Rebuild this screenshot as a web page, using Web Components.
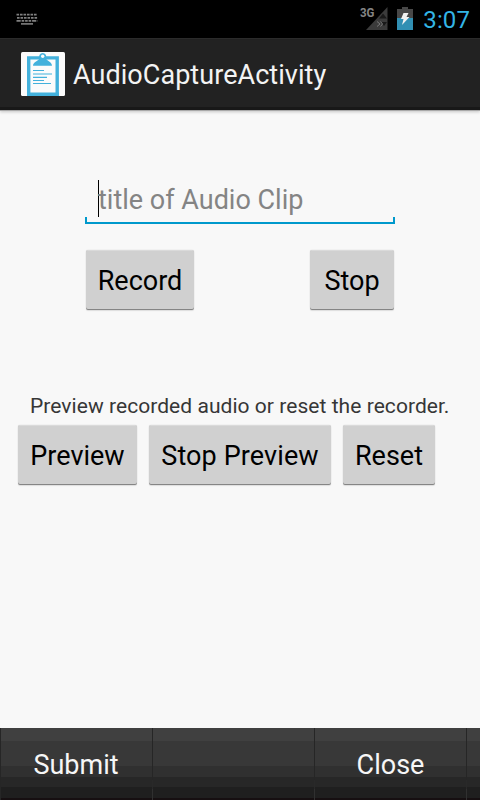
<!DOCTYPE html>
<html lang="en">
<head>
<meta charset="utf-8">
<title>AudioCaptureActivity</title>
<style>
html,body{margin:0;height:100%}
body{font-family:Roboto,"Liberation Sans",sans-serif;background:#f8f8f8;overflow:hidden}
</style>
</head>
<body>
<audio-screen></audio-screen>
<script>
const define = (name, html) => customElements.define(name, class extends HTMLElement {
  constructor() {
    super();
    this.attachShadow({mode: 'open'}).innerHTML = html;
  }
});

define('status-bar', `
<style>
:host{display:flex;box-sizing:border-box;height:38px;background:#000;align-items:center;padding:0 10px 0 16px}
.kb{margin-right:auto}
.sig{margin-right:9px}.bat{margin-right:10px}
svg{display:block}
.sig{overflow:visible}
span{color:#33b5e5;font-size:24px;line-height:36px;padding-top:2px;letter-spacing:.1px}
</style>
<svg class="kb" width="22" height="12" viewBox="0 0 22 12" fill="none" stroke="#808080">
<path stroke-width="1.800" stroke-dasharray="2.6 .9" d="M.5 1.700H21.5M1 4.900H21.5"/><path stroke-width="1.800" stroke-dasharray="4.200 .9 2.600 .9 2.600 .9 2.600 .9" d="M.5 7.900H21.5"/><path stroke-width="1.600" d="M5 10.900H17"/></svg>
<svg class="sig" width="28" height="32" viewBox="0 -3 28 32"><path d="M27.500 1V24H6Z" fill="#3b3b3b"/><path d="M23 7.500l4 5h-8zM21 16h6l-3 4z" fill="#191919"/><path d="M17 15.500l3 2.500-3 2.500M20.500 15.500l2 2.500-2 2.500" stroke="#777" fill="none"/><text x="0" y="11" font-family="Roboto" font-size="13.500" font-weight="700" fill="#858585" textLength="14.500" lengthAdjust="spacingAndGlyphs">3G</text></svg>
<svg class="bat" width="16" height="24" viewBox="0 0 16 24"><path d="M5 0h6v2h5v9H0V2h5z" fill="#484848"/><path d="M0 11h16v12H0z" fill="#318fb3"/><path d="M6.500 6h5l-2 4h3L5 18l1.500-6H4z" fill="#f2f2f2"/></svg>
<span>3:07</span>`);

define('action-bar', `
<style>
:host{display:flex;box-sizing:border-box;height:72px;background:linear-gradient(#2b2b2b 0 1px,#222 1px 69px,#181818 69px);align-items:center;padding:1px 0 0 21px;gap:8px;color:#f3f3f3;font-size:27px;box-shadow:0 1px 0 #a9a9a9,0 2px 3px rgba(0,0,0,.2)}
svg{display:block;flex:none;margin-top:-2px}
span{letter-spacing:.05px;white-space:nowrap}
</style>
<svg width="44" height="46" viewBox="0 0 44 46"><rect y="1" width="44" height="44" rx="1.500" fill="#fbfbfb"/><path d="M7.700 45V6.900H36.200V45M6 43.200H38" fill="none" stroke="#43b1dc" stroke-width="3.400"/><path d="M12 14.800c0-4 5-4 6.500-7.500a3.600 3.600 0 1 1 6.400 0c1.500 3.500 6.100 3.500 6.100 7.500z" fill="#43b1dc"/><circle cx="21.700" cy="5.300" r="1.700" fill="#fbfbfb"/><path d="M12 19.500h11M12 23h19M12 26.300h14M12 29.500h11M12 32.500h18" stroke="#43b1dc" stroke-width="1.200"/></svg>
<span><slot></slot></span>`);

define('title-field', `
<style>
:host{display:flex;box-sizing:border-box;width:310px;height:48px;padding:4px 12px 0 13px;color:#848484;font-size:27px;line-height:36px;
background:linear-gradient(#0099cc,#0099cc) 0 46px/100% 2px no-repeat,linear-gradient(#0099cc,#0099cc) 0 41px/2px 7px no-repeat,linear-gradient(#0099cc,#0099cc) 100% 41px/2px 7px no-repeat}
i{flex:none;width:1px;height:37px;background:#000}
span{white-space:nowrap;margin-left:-1px;padding-top:2px}
</style>
<i></i><span><slot></slot></span>`);

define('holo-button', `
<style>
:host{display:flex;box-sizing:border-box;width:var(--w);height:59px;justify-content:center;align-items:center;background:#d0d0d0;color:#000;font-size:27px;border-radius:2px;border-top:1px solid #dadada;box-shadow:0 1px 0 #858585,0 2px 1px #ddd,0 0 1px #bbb;white-space:nowrap;padding-top:1px}
</style><slot></slot>`);

define('menu-item', `
<style>
:host{display:flex;box-sizing:border-box;width:var(--w,162px);height:72px;justify-content:center;padding-top:21px;font-size:27px;line-height:32px;color:#f6f6f6;
border-right:1px solid;border-image:linear-gradient(#262626 0 52px,#292929 52px 60px,#303030 60px) 1}
</style><slot></slot>`);

define('menu-bar', `
<style>
:host{display:flex;height:72px;background:linear-gradient(#404040 0 13px,#383838 13px 38px,#303030 38px 49px,#272727 49px 59px,#1f1f1f 59px 70px,#160f11 70px);box-shadow:inset 1px 0 #262626}
</style><slot></slot>`);

define('audio-screen', `
<style>
:host{display:flex;flex-direction:column;height:800px;width:480px;background:#f8f8f8}
main{flex:1;display:flex;flex-direction:column}
title-field{margin:66px 0 0 85px}
.rec{display:flex;justify-content:space-between;margin:26px 86px 0}
p{margin:84px 0 0 30px;font-size:21px;line-height:26px;letter-spacing:.05px;color:#363636;white-space:nowrap}
.pre{display:flex;gap:12px;margin:6px 0 0 18px}
</style>
<status-bar></status-bar>
<action-bar>AudioCaptureActivity</action-bar>
<main>
<title-field>title of Audio Clip</title-field>
<div class="rec"><holo-button style="--w:108px">Record</holo-button><holo-button style="--w:84px">Stop</holo-button></div>
<p>Preview recorded audio or reset the recorder.</p>
<div class="pre"><holo-button style="--w:119px">Preview</holo-button><holo-button style="--w:182px;letter-spacing:.1px">Stop Preview</holo-button><holo-button style="--w:92px">Reset</holo-button></div>
</main>
<menu-bar><menu-item style="--w:153px">Submit</menu-item><menu-item></menu-item><menu-item style="--w:152px">Close</menu-item></menu-bar>`);
</script>
</body>
</html>
